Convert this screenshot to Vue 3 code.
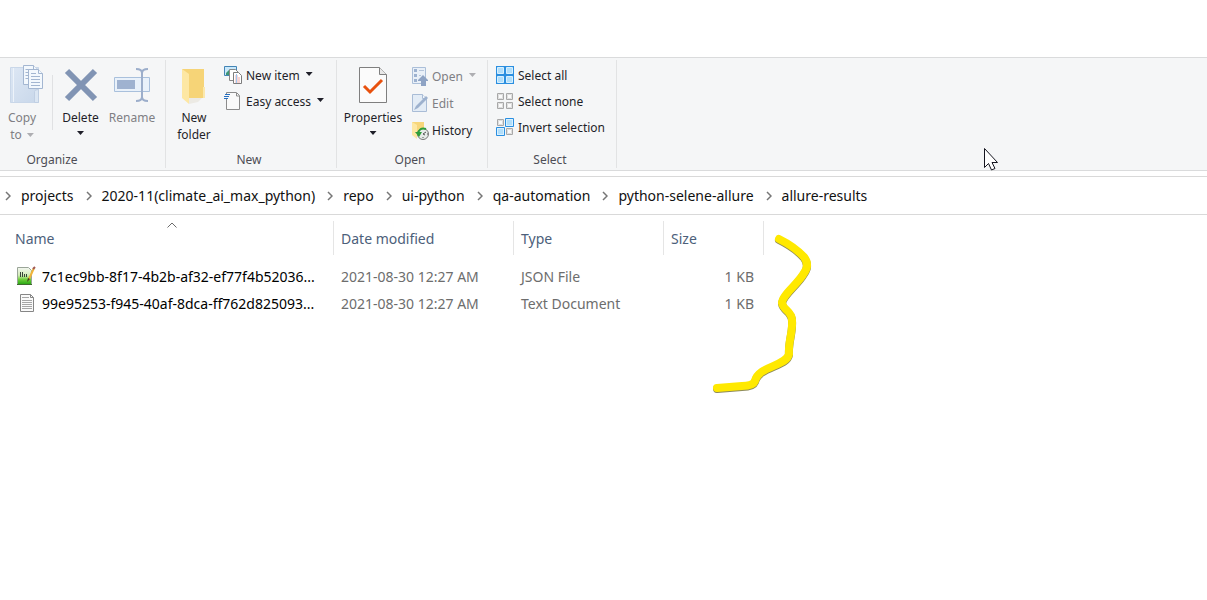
<script setup>
const crumbs = [
  'projects',
  '2020-11(climate_ai_max_python)',
  'repo',
  'ui-python',
  'qa-automation',
  'python-selene-allure',
  'allure-results',
]

const files = [
  { icon: 'json', name: '7c1ec9bb-8f17-4b2b-af32-ef77f4b52036...', date: '2021-08-30 12:27 AM', type: 'JSON File', size: '1 KB' },
  { icon: 'text', name: '99e95253-f945-40af-8dca-ff762d825093...', date: '2021-08-30 12:27 AM', type: 'Text Document', size: '1 KB' },
]
</script>

<template>
  <main class="explorer">
    <div class="ribbon">
      <section class="group organize">
        <div class="tools">
          <button class="big copy" type="button" disabled>
            <svg width="34" height="40" viewBox="-1 0 34 40">
              <defs>
                <linearGradient id="cover" x1="0" y1="0" x2="1" y2="1">
                  <stop offset="0" stop-color="#dde7f4" />
                  <stop offset="1" stop-color="#c8d7ea" />
                </linearGradient>
              </defs>
              <path d="M.500 2.500h28v35H.500z" fill="url(#cover)" stroke="#c9d7e9" />
              <path d="M3.500 3v34" stroke="#edf3fa" />
              <path d="M24.500 37.500v-11q0-2 4-2v13z" fill="#dbe6f3" stroke="#c0cfe3" />
              <g fill="#f3f8fd" stroke="#a3b6d1">
                <path d="M13.500.500h10l4 4v15h-14z" />
                <path d="M23.500.500v4h4M15.500 4.500h5M15.500 7.500h7M15.500 10.500h7M15.500 13.500h7" />
                <path d="M18.500 4.500h10l4 4v15h-14z" />
                <path d="M28.500 4.500v4h4M21 8.500h5M21 11.500h9M21 14.500h9M21 17.500h9M21 20.500h9" />
              </g>
            </svg>
            <span>Copy<br />to <i class="caret"></i></span>
          </button>
          <i class="divider"></i>
          <button class="big delete" type="button">
            <svg width="36" height="40" viewBox="0 0 36 40">
              <path d="M4 6 32 34M32 6 4 34" stroke="#8194b4" stroke-width="6" />
            </svg>
            <span>Delete</span>
            <i class="caret"></i>
          </button>
          <button class="big rename" type="button" disabled>
            <svg width="38" height="40" viewBox="0 0 38 40">
              <path d="M1.500 12.500h35v14h-35z" fill="#e9f1fa" stroke="#a9c0dc" />
              <path d="M4 15h18v9H4z" fill="#9fb2d0" />
              <path d="M23 4q6 0 6 4v24q0 4-6 4M35 4q-6 0-6 4v24q0 4 6 4" fill="none" stroke="#9caecb" stroke-width="2" />
            </svg>
            <span>Rename</span>
          </button>
        </div>
        <h2>Organize</h2>
      </section>

      <section class="group new">
        <div class="tools">
          <button class="big folder" type="button">
            <svg width="36" height="40" viewBox="0 0 36 40">
              <path d="M6 4h22v18h1v11H10z" fill="#f6d477" />
              <path d="M27 22h2v11h-2z" fill="#fbe8ac" />
              <path d="M6 4l7 5v30l-7-6z" fill="#fde7a3" />
              <path d="M13 33h13l-4 4-9 2z" fill="#eceae4" />
            </svg>
            <span>New<br />folder</span>
          </button>
          <div class="stack">
            <button class="small" type="button">
              <svg width="18" height="20" viewBox="0 0 18 20">
                <path d="M.500 1.500h12v9H.500z" fill="#c8e8fb" stroke="#4384b5" />
                <path d="M2 8l3-3 4 4v1H2z" fill="#3f9675" />
                <path d="M5.500 4.500h6l3 3v8h-9z" fill="#fff" stroke="#888" />
                <path d="M9.500 7.500h5l3 3v8h-8z" fill="#fff" stroke="#7d7d7d" />
                <path d="M11 11h3M11 13h5M11 15h5M11 17h5" stroke="#edaaa8" />
                <path d="M12.500 9v9" stroke="#9cc7f0" />
              </svg>
              New item <i class="caret"></i>
            </button>
            <button class="small" type="button">
              <svg width="18" height="20" viewBox="0 0 18 20">
                <path d="M2.500 1.500h10l3 3v14h-13z" fill="#fafafa" stroke="#8c8c8c" />
                <path d="M12.500 2v3h3" fill="none" stroke="#8c8c8c" />
                <path d="M1 3h5v5H0z" fill="#f5f6f7" />
                <path d="M1 3.500h5M0 5.500h5M0 7.500h4" stroke="#266fc0" />
              </svg>
              Easy access <i class="caret"></i>
            </button>
          </div>
        </div>
        <h2>New</h2>
      </section>

      <section class="group open">
        <div class="tools">
          <button class="big properties" type="button">
            <svg width="36" height="40" viewBox="0 0 36 40">
              <path d="M4.500 2.500h20l7 7v28h-27z" fill="#fbfbfb" stroke="#7f7f7f" />
              <path d="M24.500 2.500v7h7" fill="#e8e8e8" stroke="#7f7f7f" />
              <path d="M9 21l6 6 12-12" fill="none" stroke="#e8510e" stroke-width="3" />
            </svg>
            <span>Properties</span>
            <i class="caret"></i>
          </button>
          <div class="stack">
            <button class="small" type="button" disabled>
              <svg width="16" height="20" viewBox="0 0 16 20">
                <path d="M.500 1.500h13v16H.500z" fill="#e9f0f8" stroke="#abbfd9" />
                <path d="M2 3h3v3H2zM2 8h3v3H2zM2 13h3v3H2z" fill="#9db2d0" />
                <path d="M7 4.500h5M7 9.500h2" stroke="#b5c5db" />
                <path d="M11 9l5 5v1h-2v5H9v-5H6v-1z" fill="#8ea3c4" />
              </svg>
              Open <i class="caret"></i>
            </button>
            <button class="small" type="button" disabled>
              <svg width="16" height="20" viewBox="0 0 16 20">
                <path d="M.500 1.500h10l4 4v13H.500z" fill="#e3ecf6" stroke="#a9bcd6" />
                <path d="M10.500 1.500v4h4" fill="#f2f6fb" stroke="#a9bcd6" />
                <path d="M2 17l2-4 10-10 2 2L6 15z" fill="#9db1ce" />
              </svg>
              Edit
            </button>
            <button class="small" type="button">
              <svg width="16" height="20" viewBox="0 0 16 20" overflow="visible">
                <path d="M0 2h12v14H2z" fill="#f7d67b" />
                <path d="M0 2l5 3v14l-5-4z" fill="#fde7a3" />
                <circle cx="11" cy="14" r="5.500" fill="#e6ebe8" stroke="#777" />
                <path d="M11 14l3-2M11 14l2 1M11 17v1M15 14h1" stroke="#555" />
                <path d="M14 9q-7-2-8 5" fill="none" stroke="#2e9e3a" stroke-width="2" />
                <path d="M3 12h7l-3 5z" fill="#2e9e3a" />
              </svg>
              History
            </button>
          </div>
        </div>
        <h2>Open</h2>
      </section>

      <section class="group select">
        <div class="tools">
          <div class="stack">
            <button class="small" type="button">
              <svg width="18" height="20" viewBox="0 0 18 20">
                <path d="M0 1h18v18H0z" fill="#2b8fe0" />
                <path d="M1.500 2.500h6v6h-6zM10.500 2.500h6v6h-6zM1.500 11.500h6v6h-6zM10.500 11.500h6v6h-6z" fill="#b2def9" stroke="#d8f0ff" />
              </svg>
              Select all
            </button>
            <button class="small" type="button">
              <svg width="18" height="20" viewBox="0 0 18 20">
                <path d="M1.500 2.500h6v6h-6zM10.500 2.500h6v6h-6zM1.500 11.500h6v6h-6zM10.500 11.500h6v6h-6z" fill="#fafafa" stroke="#a8a8a8" />
                <path d="M2.500 3.500h4v4h-4zM11.500 3.500h4v4h-4zM2.500 12.500h4v4h-4zM11.500 12.500h4v4h-4z" fill="none" stroke="#dedede" />
              </svg>
              Select none
            </button>
            <button class="small" type="button">
              <svg width="18" height="20" viewBox="0 0 18 20">
                <path d="M1.500 2.500h6v6h-6zM10.500 11.500h6v6h-6z" fill="#fafafa" stroke="#a8a8a8" />
                <path d="M2.500 3.500h4v4h-4zM11.500 12.500h4v4h-4z" fill="none" stroke="#dedede" />
                <path d="M9.500 1.500h8v8h-8zM.500 10.500h8v8h-8z" fill="#d8f0ff" stroke="#2b8fe0" />
                <path d="M11 3h5v5h-5zM2 12h5v5H2z" fill="#b2def9" />
              </svg>
              Invert selection
            </button>
          </div>
        </div>
        <h2>Select</h2>
      </section>
    </div>

    <nav class="address" aria-label="Path">
      <ol>
        <li v-for="crumb in crumbs" :key="crumb">
          <svg width="6" height="10" viewBox="0 0 6 10"><path d="M1 1l4 4-4 4" fill="none" stroke="#767676" stroke-width="1.500" /></svg>
          <a href="#">{{ crumb }}</a>
        </li>
      </ol>
    </nav>

    <table class="files">
      <thead>
        <tr>
          <th class="c-name" scope="col">
            Name
            <svg class="sort" width="10" height="6" viewBox="0 0 10 6"><path d="M.500 5.500l4.500-4.500 4.500 4.500" fill="none" stroke="#6b6b6b" /></svg>
          </th>
          <th class="c-date" scope="col">Date modified</th>
          <th class="c-type" scope="col">Type</th>
          <th class="c-size" scope="col">Size</th>
        </tr>
      </thead>
      <tbody>
        <tr v-for="file in files" :key="file.name">
          <td class="name">
            <div class="file">
              <svg v-if="file.icon === 'json'" width="20" height="22" viewBox="0 0 20 22">
                <defs>
                  <linearGradient id="leaf" x1="0" y1="0" x2="0" y2="1">
                    <stop offset="0" stop-color="#f4f6f2" />
                    <stop offset=".45" stop-color="#d3ecb8" />
                    <stop offset=".7" stop-color="#6fce3c" />
                    <stop offset="1" stop-color="#25a512" />
                  </linearGradient>
                </defs>
                <path d="M1.500 1.500h11l3 3v14h-14z" fill="url(#leaf)" stroke="#9aa598" />
                <path d="M1 18.500h15" stroke="#3f6b2f" />
                <path d="M4.500 6v5M6.500 6v5M8.500 8v3M10.500 8v3" stroke="#37443a" />
                <path d="M18 2l-5 11" stroke="#f0b43a" stroke-width="2" />
                <path d="M17 3l2-2" stroke="#a05a55" stroke-width="2" />
                <path d="M12 12l-1 4 3-3z" fill="#4b3a22" />
              </svg>
              <svg v-else width="20" height="22" viewBox="0 0 20 22">
                <path d="M4.500 1.500h10l3 3v14h-13z" fill="#fafafa" stroke="#868686" />
                <path d="M14.500 1.500v3h3" fill="none" stroke="#868686" />
                <path d="M6 4.500h7M6 7.500h10M6 9.500h10M6 11.500h10M6 13.500h10M6 15.500h10" stroke="#a6a6a6" />
              </svg>
              <span>{{ file.name }}</span>
            </div>
          </td>
          <td>{{ file.date }}</td>
          <td>{{ file.type }}</td>
          <td class="size">{{ file.size }}</td>
        </tr>
      </tbody>
    </table>

    <svg class="stroke" width="110" height="170" viewBox="0 0 110 170" aria-hidden="true">
      <g fill="none" stroke-width="8" stroke-linecap="round" stroke-linejoin="round">
        <path stroke="#8d8a5a" transform="translate(0 1)" d="M69 9Q85 17 94 27Q100 35 94 43C88 54 72 65 72 73C73 80 82 81 82 90C83 102 78 112 79 124C77 136 48 136 45 151Q43 156 32 156L7 158" />
        <path stroke="#ffe900" d="M69 9Q85 17 94 27Q100 35 94 43C88 54 72 65 72 73C73 80 82 81 82 90C83 102 78 112 79 124C77 136 48 136 45 151Q43 156 32 156L7 158" />
      </g>
    </svg>
    <svg class="pointer" width="16" height="25" viewBox="0 0 16 25" aria-hidden="true">
      <path d="M1.500 1.500v19l4-4 3 6.500 3.500-1.500-3-6h5.500z" fill="#fff" stroke="#15151f" />
    </svg>
  </main>
</template>

<style>
body {
  background: #fff;
}
</style>

<style scoped>
.explorer {
  position: relative;
  overflow: hidden;
  min-height: 100vh;
  box-sizing: border-box;
  padding-top: 57px;
  font-family: "Noto Sans", "Open Sans", sans-serif;
  font-size: 14px;
  color: #1b1b1b;
}
svg {
  display: block;
  flex: none;
}
button {
  border: 0;
  padding: 0;
  background: none;
  font: inherit;
  color: #1f1f29;
}
button:disabled {
  color: #7f7f84;
}
.ribbon {
  display: flex;
  background: #f5f6f7;
  border-top: 1px solid #dadbdc;
  border-bottom: 1px solid #dadbdc;
  padding: 2px 0;
  font-size: 12px;
  line-height: 17px;
}
.group {
  display: flex;
  flex-direction: column;
  box-sizing: border-box;
  height: 108px;
  border-right: 1px solid #e2e3e4;
}
.organize { width: 166px; }
.new { width: 171px; }
.open { width: 151px; }
.select { width: 129px; }
.tools {
  display: flex;
  flex: 1;
}
h2 {
  margin: 0;
  font-size: 12px;
  font-weight: 400;
  line-height: 17px;
  text-align: center;
  color: #4d4d55;
}
.organize h2 {
  padding-right: 61px;
}
.new h2,
.open h2,
.select h2 {
  padding-right: 4px;
}
.big {
  display: flex;
  flex-direction: column;
  align-items: center;
  padding-top: 5px;
}
.big svg {
  margin-bottom: 4px;
}
.copy {
  width: 52px;
}
.copy span {
  padding-right: 8px;
}
.divider {
  height: 55px;
  margin-top: 15px;
  border-left: 1px solid #e0e1e3;
}
.delete { width: 55px; }
.rename { width: 48px; }
.folder { width: 56px; }
.properties { width: 72px; }
.caret {
  display: inline-block;
  width: 7px;
  height: 4px;
  background: currentColor;
  clip-path: polygon(0 0, 100% 0, 50% 100%);
  vertical-align: 2px;
  margin-left: 2px;
}
.small .caret {
  margin: 0 0 2px 2px;
}
.copy .caret,
.small:disabled .caret {
  opacity: .6;
}
.big > .caret {
  margin: 5px 0 0;
}
.stack {
  display: flex;
  flex-direction: column;
  gap: 6px;
  padding-top: 5px;
}
.open .stack {
  gap: 7px;
  padding: 6px 0 0 3px;
}
.new .stack {
  padding-left: 2px;
}
.select .stack {
  padding-left: 8px;
}
.small {
  display: flex;
  align-items: center;
  gap: 4px;
  height: 20px;
  white-space: nowrap;
}
.address {
  margin-top: 5px;
  border-top: 1px solid #d9d9d9;
  border-bottom: 1px solid #d9d9d9;
}
ol {
  display: flex;
  margin: 0;
  padding: 0 0 0 5px;
  list-style: none;
  height: 37px;
}
li {
  display: flex;
  align-items: center;
  gap: 10px;
  margin-right: 12px;
}
a {
  color: #111;
  text-decoration: none;
}
.files {
  width: 764px;
  margin-top: 6px;
  border-collapse: separate;
  border-spacing: 0;
  table-layout: fixed;
  line-height: 20px;
}
th {
  position: relative;
  box-sizing: border-box;
  height: 34px;
  padding: 2px 0 0 7px;
  border-right: 1px solid #e5e5e5;
  font-weight: 400;
  text-align: left;
  color: #4c607a;
}
.c-name {
  width: 334px;
  padding-left: 15px;
}
.c-date { width: 180px; }
.c-type { width: 150px; }
.sort {
  position: absolute;
  top: 1px;
  left: 50%;
}
td {
  height: 27px;
  padding: 0 0 0 7px;
  color: #6d6d6d;
  white-space: nowrap;
}
tbody::before {
  content: "";
  display: block;
  height: 8px;
}
td.name {
  padding-left: 16px;
  color: #000;
}
.file {
  display: flex;
  align-items: center;
  gap: 6px;
}
td.size {
  padding: 0 10px 0 0;
  text-align: right;
}
.stroke {
  position: absolute;
  left: 710px;
  top: 230px;
}
.pointer {
  position: absolute;
  left: 983px;
  top: 147px;
}
</style>
